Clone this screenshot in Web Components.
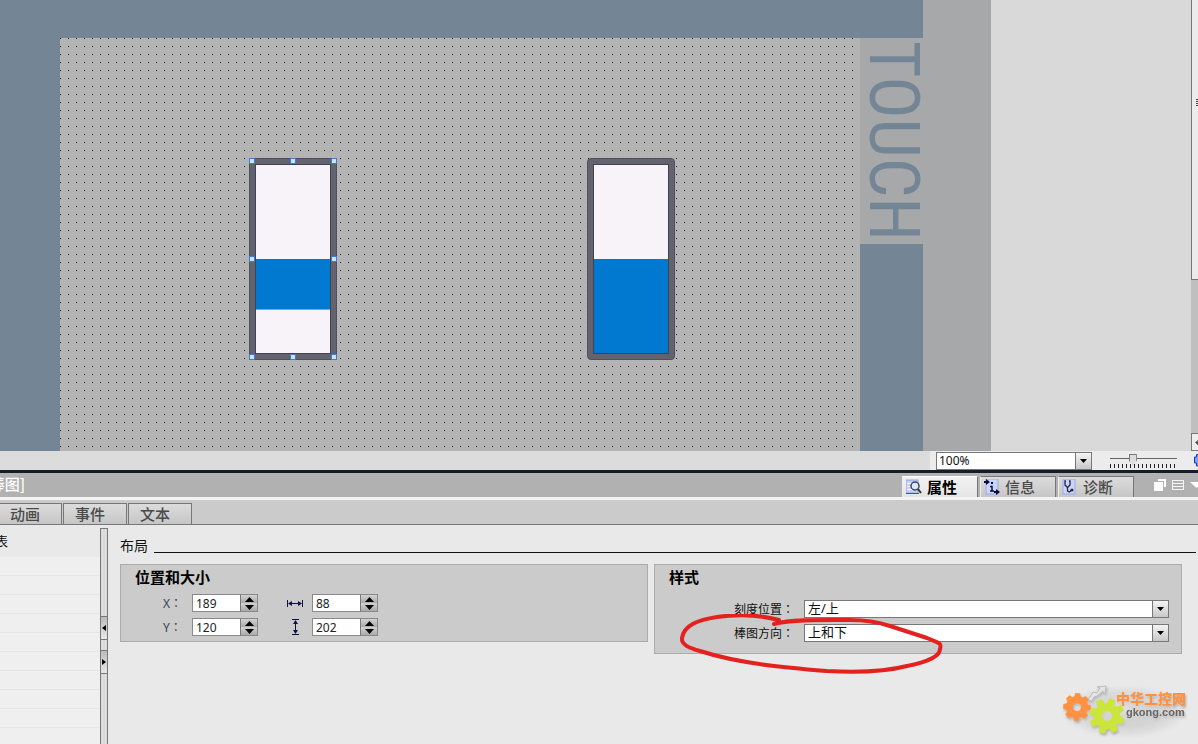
<!DOCTYPE html>
<html lang="zh-CN">
<head>
<meta charset="utf-8">
<title>HMI 画面编辑器</title>
<style>
html,body{margin:0;height:100%}
body{overflow:hidden;font-family:"Noto Sans","Noto Sans CJK SC",sans-serif;background:#e9e9e9}
</style>
</head>
<body>
<hmi-app></hmi-app>
<script>
const define = (name, html, setup) => {
  const tpl = document.createElement('template');
  tpl.innerHTML = '<style>*{box-sizing:border-box}button,input,select{font:inherit;color:inherit;margin:0}</style>' + html;
  customElements.define(name, class extends HTMLElement {
    constructor() {
      super();
      this.attachShadow({mode: 'open'}).append(tpl.content.cloneNode(true));
    }
    connectedCallback() { if (setup) setup(this, this.shadowRoot); }
  });
};

/* Bar graph object placed on the screen; "selected" adds resize handles. */
define('bar-object', `
<style>
:host{display:block;position:absolute;width:88px;height:202px;background:#63636f;border:1px solid #50505c;border-radius:4px;padding:5px}
:host([selected]){border-radius:0}
.face{height:100%;border:1px solid #42424e;background:#f7f3f8;display:flex;flex-direction:column;padding-top:94px}
.fill{background:#0179d0;flex:1}
:host([selected]) .fill{flex:none;height:51px;border-bottom:1px solid #6eaee6}
.handles{display:none;position:absolute;inset:-1px;grid-template-columns:repeat(3,6px);grid-template-rows:repeat(3,6px);justify-content:space-between;align-content:space-between}
:host([selected]) .handles{display:grid}
.handles i{background:#c5e4ff;border:1px solid #3c7bd0}
.handles i:nth-child(5){visibility:hidden}
</style>
<div class="face"><div class="fill"></div></div>
<div class="handles"><i></i><i></i><i></i><i></i><i></i><i></i><i></i><i></i><i></i></div>`);

define('screen-workspace', `
<style>
:host{display:flex;flex:1;min-height:0;background:#d9d9d9;overflow:hidden}
.device{flex:none;display:flex;padding:38px 0 0 60px;background:#748595;border-right:68px solid #a7a8aa}
.screen{position:relative;width:800px;background:#b5b5b5}
.dots{position:absolute;inset:0;width:100%;height:100%}
.brand{width:63px;height:206px;padding-left:4px;background:#a7a8aa;display:flex;align-items:center;justify-content:center;writing-mode:vertical-rl;white-space:nowrap;font:70px/59px "Roboto Condensed","Liberation Sans Narrow",Roboto,sans-serif;color:#748595}
.space{flex:1}
.bar{flex:none;width:7px;background:#bfbfbf;display:flex;flex-direction:column;justify-content:space-between;overflow:hidden}
.thumb{height:62%;background:#ececec;border:1px solid #777;border-width:0 0 1px 1px;display:flex;align-items:center;justify-content:flex-end;padding-bottom:72px}
.bar button{width:18px;height:18px;padding:0;border:1px solid #777;background:#eee;display:flex;align-items:center;padding-left:3px}
</style>
<div class="device">
 <div class="screen">
  <svg class="dots" aria-hidden="true"><defs><pattern id="d" width="8" height="8" patternUnits="userSpaceOnUse"><path d="M1 1h1v1H1zM5 1h1v1H5zM3 3h1v1H3zM7 3h1v1H7zM1 5h1v1H1zM5 5h1v1H5zM3 7h1v1H3zM7 7h1v1H7z" fill="#acacac"/><path d="M0 0h1v1H0z" fill="#111"/></pattern></defs><rect width="100%" height="100%" fill="url(#d)"/></svg>
  <bar-object selected style="left:189px;top:120px"></bar-object>
  <bar-object style="left:527px;top:120px"></bar-object>
 </div>
 <div class="brand">TOUCH</div>
</div>
<div class="space"></div>
<div class="bar"><div class="thumb"><svg width="2" height="8"><path d="M0 .5h2M0 2.5h2M0 4.5h2M0 6.5h2" stroke="#444"/></svg></div>
<button aria-label="向左滚动"><svg width="8" height="7"><path d="M0 3.5L4 0v7z" fill="#555"/></svg></button></div>`);

/* Labelled drop-down */
define('drop-down', `
<style>
:host{display:flex;align-items:center;font-size:12px;color:#111}
label{flex:none;width:70px;white-space:nowrap}
label:empty{display:none}
.colon{font-family:"Noto Sans CJK TC",sans-serif}
.box{position:relative;flex:1;height:18px;font-size:13px}
:host([compact]) .box{font-size:12px}
select{appearance:none;width:100%;height:100%;border:1px solid #777;border-radius:0;background:#fff;padding:0 20px 2px 3px;line-height:14px;display:block}
:host([compact]) select{padding:0 20px 1px 2px}
.arrow{position:absolute;right:0;top:0;width:17px;height:18px;border:1px solid #777;background:linear-gradient(#f4f4f4,#c8c8c8);display:grid;place-items:center;pointer-events:none}
</style>
<label for="s"></label><div class="box"><select id="s"><option></option></select><span class="arrow"><svg width="7" height="4"><path d="M0 0h7L3.500 4z"/></svg></span></div>`,
(el, r) => {
  const text = el.getAttribute('label');
  if (text) r.querySelector('label').innerHTML = `${text}<span class="colon" lang="zh-TW">：</span>`;
  r.querySelector('option').textContent = el.getAttribute('value');
  r.querySelector('select').setAttribute('aria-label', text || '缩放');
});

/* Numeric box with up and down buttons */
define('spin-box', `
<style>
:host{display:flex;align-items:center;font-size:12px;color:#222;height:18px}
label{width:29px;display:flex;align-items:center;white-space:nowrap;color:#3c4150}
.colon{font-family:"Noto Sans CJK TC",sans-serif;line-height:18px}
:host([icon]) label{width:25px}
:host([icon]) .colon{display:none}
.box{display:flex;width:66px;height:18px;border:1px solid #8a8a8a;background:#fff}
input{width:47px;min-width:0;border:0;padding:0 0 0 3px;background:none;height:16px}
.steps{flex:1;display:flex;flex-direction:column;border-left:1px solid #777}
button{flex:1;min-height:0;padding:0;border:0;background:linear-gradient(#d2d2d2,#aaa);display:grid;place-items:center}
</style>
<label for="n"><slot></slot><span class="colon" lang="zh-TW">：</span></label><div class="box"><input id="n" type="text"><span class="steps"><button aria-label="增大"><svg width="9" height="5"><path d="M0 5L4.500 0 9 5z"/></svg></button><button aria-label="减小"><svg width="9" height="5"><path d="M0 0L4.500 5 9 0z"/></svg></button></span></div>`,
(el, r) => { r.querySelector('input').value = el.getAttribute('value'); });

define('status-bar', `
<style>
:host{display:flex;flex:none;height:19px;background:linear-gradient(90deg,#dcdcdc 0 930px,#ececec 930px);align-items:flex-start;justify-content:flex-end;padding-top:1px;overflow:hidden}
drop-down{width:156px;margin-right:18px}
.zoom{width:67px;height:17px;margin-right:16px;background:repeating-linear-gradient(90deg,#222 0 1px,transparent 1px 4px) 0 12px/100% 4px no-repeat,linear-gradient(#666,#666) 0 6px/100% 1px no-repeat}
input{appearance:none;display:block;width:59px;height:12px;margin:1px 4px;background:none}
input::-webkit-slider-thumb{appearance:none;width:8px;height:11px;border:1px solid #777;background:#ddd;clip-path:polygon(0 0,100% 0,100% 65%,50% 100%,0 65%)}
</style>
<drop-down compact value="100%"></drop-down>
<div class="zoom"><input type="range" value="29" aria-label="缩放级别"></div>
<svg width="5" height="17"><path d="M6 2.500H3.500v2.500H1.500v6h2v3H6" fill="#7aa2f8" stroke="#1838b8"/></svg>`);

define('tab-item', `
<style>
:host{display:block}
button{display:flex;align-items:center;width:100%;height:100%;padding:0 0 0 11px;border:1px solid #777;border-bottom:0;background:linear-gradient(#dcdcdc,#c6c6c6);font:500 15px/20px "Noto Sans CJK SC",sans-serif;color:#4a4a4a;white-space:nowrap;gap:5px}
:host([iconic]) button{padding-left:3px;border-color:#777 #777 #eee #eee}
:host([active]) button{font-weight:700;color:#000;background:linear-gradient(#f2f2f2,#e4e4e4);border-top-color:#fff}
::slotted(svg){flex:none}
</style>
<button role="tab"><slot></slot></button>`);

define('inspector-header', `
<style>
:host{display:flex;flex:none;height:30px;background:#b1b1b1;border-top:3px solid #161c2a;border-bottom:3px solid #f3f3f3;overflow:hidden}
.name{width:25px;display:flex;justify-content:flex-end;overflow:hidden;white-space:nowrap;font:500 15px/22px "Noto Sans CJK SC",sans-serif;color:#fff}
.tabs{margin-left:auto;display:flex;gap:2px;padding-top:3px}
tab-item{width:76px;height:21px}
.tools{display:flex;gap:6px;align-items:flex-start;width:44px;padding-top:6px;margin-left:20px;overflow:hidden}
.tools button{flex:none;border:0;background:none;padding:0;height:12px}
.tools svg{display:block}
</style>
<div class="name">棒图]</div>
<div class="tabs" role="tablist">
<tab-item iconic active><svg width="16" height="16"><rect x="0" y="1" width="12" height="13" fill="#c5d0f5" stroke="#93a4dc"/><path d="M1 4.500h9M1 7.500h9M1 10.500h9" stroke="#fff"/><circle cx="9" cy="7" r="4" fill="#dce8fb" stroke="#3c4560" stroke-width="1.500"/><path d="M12 10l3 4" stroke="#333" stroke-width="2"/><path d="M0 14.500h13" stroke="#3a55c4"/></svg>属性</tab-item>
<tab-item iconic><svg width="16" height="16"><rect x="2" y="0" width="12" height="15" fill="#cbd5fa" stroke="#9daade"/><path d="M0 3h3M10 13h3" stroke="#080c40" stroke-width="2"/><path d="M2 0l4 3-4 3zM12 10l4 3-4 3z" fill="#080c40"/><path d="M6 7.500h2V12M6 12h4" fill="none" stroke="#080c40" stroke-width="1.500"/><path d="M7 3h2v2H7z" fill="#080c40"/></svg>信息</tab-item>
<tab-item iconic><svg width="16" height="16"><rect x="1" y="0" width="12" height="15" fill="#cbd5fa" stroke="#9daade"/><path d="M4 2H3v4l2 2h1l2-2V2H7M5.500 8v4l2 1 2-2" fill="none" stroke="#20264c" stroke-width="1.300"/><circle cx="10" cy="11" r="1.500" fill="#20264c"/></svg>诊断</tab-item>
</div>
<div class="tools">
<button aria-label="浮动"><svg width="12" height="12"><path d="M4 0h8v8h-2V2H4z" fill="#fff"/><path d="M0 3h9v9H0z" fill="#fff"/></svg></button>
<button aria-label="停靠"><svg width="12" height="12"><path d="M0 1.500h12M0 4.500h12M0 7.500h12M0 10.500h12M.5 1v10M11.500 1v10" fill="none" stroke="#f4f4f4"/></svg></button>
<button aria-label="折叠"><svg width="13" height="12"><path d="M0 3h13L6.500 9z" fill="#fff"/></svg></button>
</div>`);

define('sub-tabs', `
<style>
:host{display:flex;flex:none;height:25px;gap:1px;padding-top:3px;background:#cbcbcb;border-bottom:1px solid #777}
tab-item{width:64px}
tab-item:first-of-type{margin-left:-2px}
</style>
<tab-item>动画</tab-item><tab-item>事件</tab-item><tab-item>文本</tab-item>`);

define('side-list', `
<style>
:host{display:flex;flex:none;width:108px}
.list{flex:1;padding-top:3px;background:repeating-linear-gradient(#efefef 0 18px,#e6e6e6 18px 19px) 0 32px no-repeat}
a{display:flex;justify-content:flex-end;width:8px;height:29px;overflow:hidden;white-space:nowrap;text-decoration:none;color:#111;font:13px/25px "Noto Sans CJK SC",sans-serif}
.split{width:8px;margin-top:3px;border:1px solid #777;border-bottom:0;background:#dcdcdc;display:flex;flex-direction:column;padding-top:87px;gap:10px}
.split button{height:24px;padding:0;border:solid #777;border-width:1px 0;background:linear-gradient(#bbb,#e8e8e8);display:grid;place-items:center}
</style>
<div class="list"><a href="#list">表</a></div>
<div class="split"><button aria-label="收起"><svg width="4" height="6"><path d="M4 0v6L0 3z"/></svg></button><button aria-label="展开"><svg width="4" height="6"><path d="M0 0v6l4-3z"/></svg></button></div>`);

define('group-box', `
<style>
:host{display:block;background:#cbcbcb;border:1px solid #acacac;padding:0 12px 5px 14px;align-self:start}
h3{margin:0;font:700 15px/24px "Noto Sans CJK SC",sans-serif;color:#000;height:29px}
</style>
<h3></h3><slot></slot>`, (el, r) => { r.querySelector('h3').textContent = el.getAttribute('heading'); });

define('layout-page', `
<style>
:host{display:block;flex:1;min-width:0;padding:10px 16px 0 12px}
h2{display:flex;gap:6px;margin:0 -14px 8px 0;font:14px/21px "Noto Sans CJK SC",sans-serif;color:#111}
h2::after{content:"";flex:1;height:1px;background:#111;align-self:flex-end;margin-bottom:3px}
.groups{display:grid;grid-template-columns:1fr 1fr;gap:6px}
.pos{display:grid;grid-template-columns:95px 91px;gap:6px 29px;padding:0 0 0 28px}
.style{display:grid;gap:6px;padding:6px 0 6px 65px}
svg{display:block}
</style>
<h2>布局</h2>
<div class="groups">
<group-box heading="位置和大小"><div class="pos">
<spin-box value="189">X</spin-box>
<spin-box icon value="88"><svg width="16" height="8" role="img" aria-label="宽度"><path d="M.5 1v7M15.500 1v7M2 4.500h12" stroke="#0b1440"/><path d="M1 4.500L5 2v5zM15 4.500L11 2v5z" fill="#0b1440"/></svg></spin-box>
<spin-box value="120">Y</spin-box>
<spin-box icon value="202"><svg width="16" height="16" role="img" aria-label="高度"><path d="M5 .5h7M5 15.500h7M8.500 2v12" stroke="#0b1440"/><path d="M8.500 1L6 5h5zM8.500 15L6 11h5z" fill="#0b1440"/></svg></spin-box>
</div></group-box>
<group-box heading="样式"><div class="style">
<drop-down label="刻度位置" value="左/上"></drop-down>
<drop-down label="棒图方向" value="上和下"></drop-down>
</div></group-box>
</div>`);

define('hand-mark', `
<style>:host{position:absolute;left:680px;bottom:70px;pointer-events:none}svg{display:block}</style>
<svg width="264" height="60"><path transform="translate(-680 -614)" d="M779 620C760 615 738 614 717 617C698 620 684 625 682 638C681 644 688 648 700 651C740 664 790 668 827 671C865 673 888 671 907 666C928 662 940 656 940 649C942 642 938 643 927 638L890 626C875 621 865 620 850 620C825 620 792 619 774 624" fill="none" stroke="#e3211f" stroke-width="4" stroke-linecap="round" stroke-linejoin="round"/></svg>`);

define('site-mark', `
<style>
:host{position:absolute;right:12px;bottom:8px;display:flex;align-items:flex-start;filter:drop-shadow(1px 2px 1px #0004);background:radial-gradient(closest-side,#e0e0e0,#e9e9e900)}
svg{display:block}
.t{margin-left:-8px;padding-top:6px;font:900 14px/16px "Noto Sans CJK SC",sans-serif;color:#ff9140}
.t small{display:block;font:700 11px/12px "Liberation Sans",sans-serif;color:#666;padding-left:10px}
</style>
<svg width="64" height="52"><path d="M28 16l5-8 4 1 3-5-3-1 9-1-1 8-2-3-6 5-3 1-2 4z" fill="#e2e4e6" stroke="#bbb"/><path id="o" fill="#ff9140" fill-rule="evenodd"/><path id="g" fill="#cbe53a" fill-rule="evenodd"/></svg>
<div class="t">中华工控网<small>gkong.com</small></div>`,
(el, r) => {
  const gear = (cx, cy, outer, inner, hole, turn) => {
    const pts = [];
    for (let i = 0; i < 8; i++)
      for (const [a, rad] of [[-.29, inner], [-.17, outer], [.17, outer], [.29, inner]]) {
        const t = turn + i * Math.PI / 4 + a;
        pts.push((cx + Math.cos(t) * rad).toFixed(1) + ' ' + (cy + Math.sin(t) * rad).toFixed(1));
      }
    return `M${pts.join('L')}ZM${cx - hole} ${cy}a${hole} ${hole} 0 1 0 ${hole * 2} 0a${hole} ${hole} 0 1 0 ${-hole * 2} 0Z`;
  };
  r.querySelector('#o').setAttribute('d', gear(17, 23, 14, 11, 4, .05));
  r.querySelector('#g').setAttribute('d', gear(47, 32, 18, 13, 5, .3));
});

define('hmi-app', `
<style>
:host{position:relative;display:flex;flex-direction:column;height:100vh;overflow:hidden}
.inspector{display:flex;flex:none;height:219px;background:#e9e9e9}
</style>
<screen-workspace></screen-workspace>
<status-bar></status-bar>
<inspector-header></inspector-header>
<sub-tabs></sub-tabs>
<div class="inspector"><side-list></side-list><layout-page></layout-page></div>
<hand-mark></hand-mark>
<site-mark></site-mark>`);
</script>
</body>
</html>
